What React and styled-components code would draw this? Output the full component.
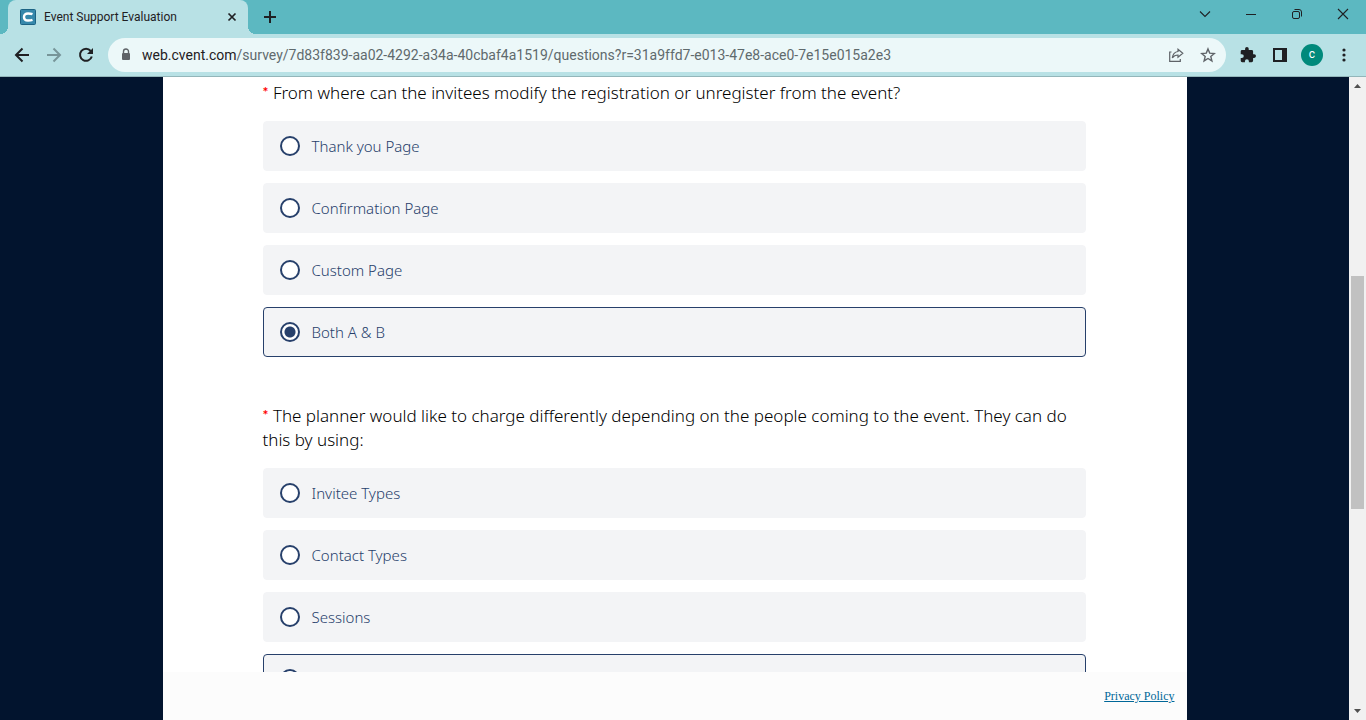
import React, { useState } from "react";
import styled, { createGlobalStyle } from "styled-components";

const GlobalStyle = createGlobalStyle`
  * { box-sizing: border-box; }
  body { margin: 0; font-family: Roboto, "Noto Sans", sans-serif; }
  button { border: 0; padding: 0; background: none; color: inherit; font: inherit; }
  svg { display: block; }
`;

const Window = styled.div`
  height: 100vh;
  display: flex;
  flex-direction: column;
  overflow: hidden;
`;

const TabStrip = styled.header`
  flex: 0 0 34px;
  display: flex;
  padding-left: 8px;
  background: #5cb8c1;
  color: #1f2023;
`;

const Tab = styled.div`
  position: relative;
  width: 240px;
  display: flex;
  align-items: center;
  gap: 8px;
  padding: 0 8px 0 12px;
  border-radius: 8px 8px 0 0;
  background: #b8e1e5;
  font-size: 12px;
  line-height: 16px;

  &::before,
  &::after {
    content: "";
    position: absolute;
    bottom: 0;
    width: 8px;
    height: 8px;
  }
  &::before {
    right: 100%;
    background: radial-gradient(circle at 0 0, transparent 8px, #b8e1e5 8px);
  }
  &::after {
    left: 100%;
    background: radial-gradient(circle at 100% 0, transparent 8px, #b8e1e5 8px);
  }
`;

const TabTitle = styled.span`
  flex: 1;
  white-space: nowrap;
`;

const IconButton = styled.button`
  flex: none;
  width: ${(p) => p.$width || 32}px;
  display: flex;
  align-items: center;
  justify-content: center;
  color: ${(p) => p.$color || "#1f2023"};
`;

const WindowControls = styled.div`
  display: flex;
  margin-left: auto;
  padding-bottom: 6px;
  color: #111;
`;

const Toolbar = styled.div`
  flex: 0 0 43px;
  display: flex;
  align-items: center;
  padding: 0 6px;
  border-bottom: 1px solid #93b6ba;
  background: #b8e1e5;
`;

const AddressBar = styled.div`
  flex: 1;
  min-width: 0;
  height: 34px;
  display: flex;
  align-items: center;
  margin: 0 6px;
  padding: 0 2px 0 10px;
  border-radius: 17px;
  background: #ecf8f9;
`;

const Address = styled.div`
  flex: 1;
  min-width: 0;
  margin-left: 8px;
  overflow: hidden;
  white-space: nowrap;
  font-size: 14px;
  line-height: 20px;
  color: #5f6a6d;
`;

const Host = styled.span`
  color: #1f2023;
`;

const Avatar = styled.span`
  width: 22px;
  height: 22px;
  border-radius: 50%;
  background: #00897b;
  color: #fff;
  font-size: 12px;
  line-height: 21px;
  text-align: center;
`;

const Viewport = styled.div`
  flex: 1;
  min-height: 0;
  display: flex;
  background: #02142e;
`;

const Page = styled.main`
  flex: 0 1 1024px;
  min-width: 0;
  margin: 0 auto;
  display: flex;
  flex-direction: column;
  background: #fff;
`;

const Survey = styled.form`
  flex: 1;
  min-height: 0;
  overflow: hidden;
  padding: 4px 101px 0 100px;
`;

const Question = styled.fieldset`
  min-width: 0;
  margin: 0 0 35px;
  padding: 0;
  border: 0;
`;

const Prompt = styled.legend`
  padding: 0;
  margin-bottom: 16px;
  font-family: "Noto Sans", sans-serif;
  font-size: 17px;
  font-weight: 300;
  line-height: 24px;
  color: #000;
`;

const Required = styled.span`
  color: #f00;
  font-family: Lato, sans-serif;
  font-size: 14px;
  font-weight: 700;
  line-height: 14px;
  vertical-align: 2px;
`;

const Choice = styled.label`
  height: 50px;
  display: flex;
  align-items: center;
  gap: 12px;
  margin-bottom: 12px;
  padding: 0 16px;
  border: 1px solid ${(p) => (p.$outlined ? "#27406b" : "#f3f4f6")};
  border-radius: 4px;
  background: #f3f4f6;
  color: #27406b;
  font-family: "Noto Sans", sans-serif;
  font-size: 15px;
  font-weight: 300;
  line-height: 24px;
`;

const Radio = styled.input`
  appearance: none;
  flex: none;
  width: 20px;
  height: 20px;
  margin: 0;
  border: 2px solid #27406b;
  border-radius: 50%;
  background: #fff;

  &:checked {
    background: radial-gradient(circle, #27406b 5px, #fff 6px);
  }
`;

const Footer = styled.footer`
  flex: 0 0 48px;
  display: flex;
  align-items: center;
  justify-content: flex-end;
  padding: 0 12px;
  background: #fcfcfc;
`;

const PolicyLink = styled.a`
  color: #006798;
  font-family: "Liberation Serif", serif;
  font-size: 12px;
  line-height: 16px;
`;

const Scrollbar = styled.div`
  flex: 0 0 17px;
  display: flex;
  flex-direction: column;
  align-items: center;
  padding: 7px 0;
  background: #f1f1f1;
  color: #505050;
`;

const Track = styled.div`
  flex: 1;
  width: 13px;
  display: grid;
  grid-template-rows: 187fr 233fr 199fr;
`;

const Thumb = styled.div`
  grid-row: 2;
  background: #c1c1c1;
`;

const questions = [
  {
    id: "modify",
    prompt: "From where can the invitees modify the registration or unregister from the event?",
    choices: ["Thank you Page", "Confirmation Page", "Custom Page", "Both A & B"],
    initial: 3,
  },
  {
    id: "charge",
    prompt:
      "The planner would like to charge differently depending on the people coming to the event. They can do this by using:",
    choices: ["Invitee Types", "Contact Types", "Sessions", ""],
    initial: 3,
  },
];

function Stroke({ size, width = 2, children, ...rest }) {
  return (
    <svg width={size} height={size} viewBox={`0 0 ${size} ${size}`} fill="none" stroke="currentColor" strokeWidth={width} {...rest}>
      {children}
    </svg>
  );
}

function Favicon() {
  return (
    <svg width="16" height="16" viewBox="0 0 16 16">
      <rect x=".5" y=".5" width="15" height="15" rx="1" fill="#3688ab" stroke="#1c6384" />
      <path d="M12.500 5.200C11 4.600 9.500 4.500 8 4.500c-2.500 0-4 1.200-4 3.500s1.500 3.500 4 3.500c1.500 0 3-.1 4.500-.7" fill="none" stroke="#fff" strokeWidth="2.4" />
    </svg>
  );
}

function SurveyQuestion({ id, prompt, choices, initial }) {
  const [selected, setSelected] = useState(initial);
  return (
    <Question>
      <Prompt>
        <Required>*</Required> {prompt}
      </Prompt>
      {choices.map((choice, i) => (
        <Choice key={i} $outlined={selected === i}>
          <Radio type="radio" name={id} checked={selected === i} onChange={() => setSelected(i)} />
          {choice}
        </Choice>
      ))}
    </Question>
  );
}

export default function App() {
  return (
    <Window>
      <GlobalStyle />
      <TabStrip>
        <Tab>
          <Favicon />
          <TabTitle>Event Support Evaluation</TabTitle>
          <IconButton $width={16} aria-label="Close tab">
            <Stroke size={16} width={1.7}><path d="M4.5 4.5l7 7M11.5 4.5l-7 7" /></Stroke>
          </IconButton>
        </Tab>
        <IconButton $width={44} aria-label="New tab">
          <Stroke size={16}><path d="M8 2v12M2 8h12" /></Stroke>
        </IconButton>
        <WindowControls>
          <IconButton $width={46} aria-label="Search tabs">
            <Stroke size={12} width={1.1}><path d="M1 3.5l5 5 5-5" /></Stroke>
          </IconButton>
          <IconButton $width={46} aria-label="Minimize">
            <Stroke size={12} width={1}><path d="M1 6.5h10" /></Stroke>
          </IconButton>
          <IconButton $width={46} aria-label="Restore">
            <Stroke size={12} width={1}>
              <rect x="1.5" y="3.5" width="7" height="7" rx="1.5" />
              <path d="M3.5 1.5H8a2.5 2.5 0 0 1 2.5 2.5v4.5" />
            </Stroke>
          </IconButton>
          <IconButton $width={46} aria-label="Close">
            <Stroke size={12} width={1.1}><path d="M1 1l10 10M11 1L1 11" /></Stroke>
          </IconButton>
        </WindowControls>
      </TabStrip>

      <Toolbar>
        <IconButton aria-label="Back">
          <Stroke size={16}><path d="M15 8H2M8.5 1.5L2 8l6.500 6.500" /></Stroke>
        </IconButton>
        <IconButton $color="#779599" aria-label="Forward">
          <Stroke size={16}><path d="M1 8h13M7.500 1.500L14 8l-6.500 6.500" /></Stroke>
        </IconButton>
        <IconButton aria-label="Reload">
          <Stroke size={16}>
            <path d="M12.700 4A6 6 0 1 0 13.800 9.500" />
            <path d="M15 1v6H9z" fill="currentColor" stroke="none" />
          </Stroke>
        </IconButton>
        <AddressBar>
          <Stroke size={16} width={1.4} color="#5f6368">
            <path d="M5.500 6V4.500a2.500 2.500 0 0 1 5 0V6" />
            <rect x="4" y="6" width="8" height="7" rx="1" fill="currentColor" stroke="none" />
          </Stroke>
          <Address>
            <Host>web.cvent.com</Host>
            /survey/7d83f839-aa02-4292-a34a-40cbaf4a1519/questions?r=31a9ffd7-e013-47e8-ace0-7e15e015a2e3
          </Address>
          <IconButton $color="#5f6368" aria-label="Share">
            <Stroke size={16} width={1.2}>
              <path d="M3.500 5H1.700v9.300h10.600V12" />
              <path d="M10 2.200l4.800 4.100L10 10.300V8C7.500 8 5.700 8.800 4.300 10.800 4.800 7.500 6.600 5 10 4.500z" />
            </Stroke>
          </IconButton>
          <IconButton $color="#5f6368" aria-label="Bookmark">
            <Stroke size={16} width={1.4}>
              <path d="M8 1.900l1.700 4.200 4.600.4-3.500 3 1.100 4.400L8 11.500l-3.900 2.400 1.100-4.400-3.500-3 4.600-.4z" />
            </Stroke>
          </IconButton>
        </AddressBar>
        <IconButton aria-label="Extensions">
          <svg width="16" height="16" viewBox="1 1 22 22" fill="currentColor">
            <path d="M20.500 11H19V7a2 2 0 0 0-2-2h-4V3.500a2.500 2.500 0 0 0-5 0V5H4a2 2 0 0 0-2 2v3.800h1.500a2.700 2.700 0 0 1 0 5.400H2V20a2 2 0 0 0 2 2h3.800v-1.500a2.700 2.700 0 0 1 5.400 0V22H17a2 2 0 0 0 2-2v-4h1.500a2.500 2.500 0 0 0 0-5z" />
          </svg>
        </IconButton>
        <IconButton aria-label="Side panel">
          <svg width="14" height="14" viewBox="0 0 14 14" fill="currentColor">
            <path fillRule="evenodd" d="M0 0h14v14H0zM2 2v10h7V2z" />
          </svg>
        </IconButton>
        <IconButton aria-label="Profile">
          <Avatar>c</Avatar>
        </IconButton>
        <IconButton aria-label="Menu">
          <svg width="4" height="16" viewBox="0 0 4 16" fill="currentColor">
            <circle cx="2" cy="3" r="1.600" />
            <circle cx="2" cy="8" r="1.600" />
            <circle cx="2" cy="13" r="1.600" />
          </svg>
        </IconButton>
      </Toolbar>

      <Viewport>
        <Page>
          <Survey>
            {questions.map((q) => (
              <SurveyQuestion key={q.id} {...q} />
            ))}
          </Survey>
          <Footer>
            <PolicyLink href="#privacy">Privacy Policy</PolicyLink>
          </Footer>
        </Page>
        <Scrollbar aria-hidden="true">
          <svg width="7" height="4" viewBox="0 0 7 4" fill="currentColor"><path d="M0 4l3.500-4L7 4z" /></svg>
          <Track><Thumb /></Track>
          <svg width="7" height="4" viewBox="0 0 7 4" fill="currentColor"><path d="M0 0l3.500 4L7 0z" /></svg>
        </Scrollbar>
      </Viewport>
    </Window>
  );
}
